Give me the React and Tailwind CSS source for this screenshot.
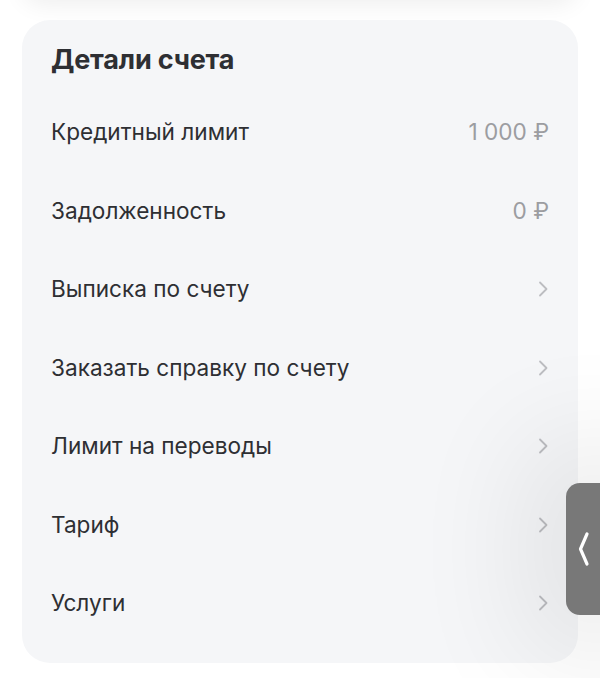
import React from "react";

const rows = [
  { label: "Кредитный лимит", value: "1 000 ₽" },
  { label: "Задолженность", value: "0 ₽" },
  { label: "Выписка по счету" },
  { label: "Заказать справку по счету" },
  { label: "Лимит на переводы" },
  { label: "Тариф" },
  { label: "Услуги" },
];

function Chevron() {
  return (
    <svg width="12" height="18" viewBox="0 0 12 18" fill="none">
      <path d="M3 2.5l6.5 6.5-6.5 6.5" stroke="#bcbdc1" strokeWidth="1.8" strokeLinecap="round" strokeLinejoin="round" />
    </svg>
  );
}

export default function App() {
  return (
    <div className="relative w-[600px] h-[678px] overflow-hidden bg-white" style={{ fontFamily: "Inter, Roboto, 'Noto Sans', sans-serif" }}>
      <div className="mx-[22px] h-[40px] -mt-[40px] rounded-[28px] bg-white shadow-[0_4px_24px_rgba(0,0,0,0.07)]" />
      <div className="mx-[22px] mt-[20px] w-[556px] h-[643px] rounded-[28px] bg-[#f5f6f8] pl-[29px] pr-[29px] flex flex-col">
        <div className="h-[72.75px] flex items-start pt-[23px]">
          <h2 className="text-[27px] leading-[34px] font-bold text-[#2e2f33] tracking-[-0.2px]">Детали счета</h2>
        </div>
        {rows.map((r) => (
          <div key={r.label} className="h-[78.5px] flex items-center justify-between shrink-0">
            <span className="text-[22.6px] text-[#2e2f33]">{r.label}</span>
            {r.value ? (
              <span className="text-[22.6px] text-[#9c9da1]">{r.value}</span>
            ) : (
              <Chevron />
            )}
          </div>
        ))}
      </div>
      <div className="absolute left-[566px] top-[483px] w-[60px] h-[132px] rounded-[14px] bg-[#787878] flex items-center pl-[11px] shadow-[0_0_110px_50px_rgba(0,0,0,0.07)]">
        <svg width="14" height="38" viewBox="0 0 14 38" fill="none">
          <path d="M10 4L3.5 19L10 34" stroke="white" strokeWidth="3.2" strokeLinecap="round" strokeLinejoin="round" />
        </svg>
      </div>
    </div>
  );
}
